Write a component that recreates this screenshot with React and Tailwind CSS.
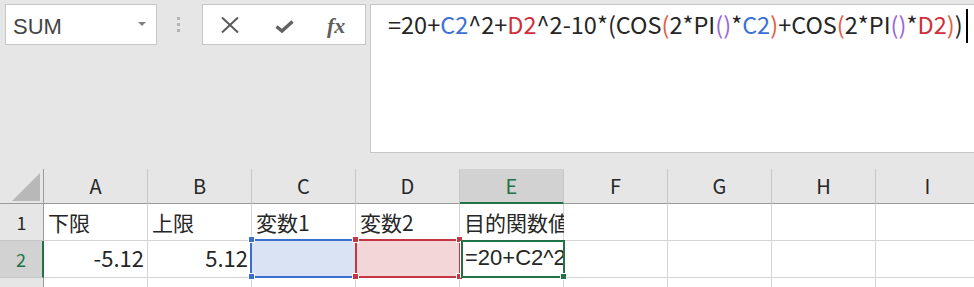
import React from "react";

const cols = ["A", "B", "C", "D", "E", "F", "G", "H", "I"];

const blue = "text-[#3b71d4]";
const red = "text-[#cf2f3c]";
const paren = "text-[#e2603f]";
const purple = "text-[#9a66d9]";

const Handle = ({ className }) => (
  <div className={`absolute w-[7px] h-[7px] border border-white ${className}`} />
);

const App = () => {
  return (
    <div className="w-[974px] h-[287px] overflow-hidden bg-[#e6e6e6] font-['Noto_Sans_CJK_JP',sans-serif] text-[#262626]">
      {/* name box + formula bar */}
      <div className="h-[169px] flex items-start pt-[4px]">
        <div className="ml-[5px] w-[152px] h-[41px] bg-white border border-[#c6c6c6] flex items-start pl-[7px] pt-[11px]">
          <span className="font-['Liberation_Sans',sans-serif] text-[22px] leading-[22px] text-[#444]">
            SUM
          </span>
          <svg className="ml-auto mr-[10px] mt-[6px]" width="8" height="4" viewBox="0 0 8 4">
            <polygon points="0,0 8,0 4,4" fill="#808080" />
          </svg>
        </div>

        <div className="ml-[20px] mt-[13px] flex flex-col gap-[3px]">
          <div className="w-[3px] h-[3px] bg-[#b4b4b4]" />
          <div className="w-[3px] h-[3px] bg-[#b4b4b4]" />
          <div className="w-[3px] h-[3px] bg-[#b4b4b4]" />
        </div>

        <div className="ml-[22px] w-[164px] h-[41px] bg-white border border-[#c6c6c6] flex items-start">
          <svg className="ml-[18px] mt-[12px]" width="18" height="16" viewBox="0 0 18 16">
            <path d="M1 0.5 L17 15.5 M17 0.5 L1 15.5" stroke="#5a5a5a" strokeWidth="2" fill="none" />
          </svg>
          <svg className="ml-[36px] mt-[15px]" width="19" height="13" viewBox="0 0 19 13">
            <path d="M1.5 6.5 L7 11 L17.5 1.5" stroke="#636363" strokeWidth="3.5" fill="none" />
          </svg>
          <span className="ml-[33px] mt-[10px] font-['Liberation_Serif',serif] italic font-semibold text-[22px] leading-[22px] text-[#5f5f5f]">
            fx
          </span>
        </div>

        <div className="ml-[4px] flex-1 h-[149px] bg-white border-l border-y border-[#c6c6c6] flex items-start pl-[17px]">
          <div className="pt-[8px] text-[23.5px] leading-[23px] whitespace-nowrap">
            =20+<span className={blue}>C2</span>^2+<span className={red}>D2</span>^2-10*(COS
            <span className={paren}>(</span>2*PI<span className={purple}>()</span>*
            <span className={blue}>C2</span>
            <span className={paren}>)</span>+COS<span className={paren}>(</span>2*PI
            <span className={purple}>()</span>*<span className={red}>D2</span>
            <span className={paren}>)</span>)
          </div>
          <div className="ml-[3px] mt-[4px] w-[2px] h-[34px] bg-black" />
        </div>
      </div>

      {/* sheet grid */}
      <div className="grid grid-cols-[44px_repeat(9,104px)] grid-rows-[35px_37px_37px_37px]">
        <div className="border-r border-b border-[#9b9b9b]">
          <svg width="43" height="34" viewBox="0 0 43 34">
            <polygon points="40,4 40,32 12,32" fill="#b8b8b8" />
          </svg>
        </div>
        {cols.map((c) =>
          c === "E" ? (
            <div
              key={c}
              className="bg-[#d2d2d2] border-r border-r-[#c6c6c6] border-b-2 border-b-[#217346] flex items-center justify-center text-[20px] leading-none text-[#217346]"
            >
              {c}
            </div>
          ) : (
            <div
              key={c}
              className="border-r border-r-[#c6c6c6] border-b border-b-[#9b9b9b] flex items-center justify-center text-[20px] leading-none"
            >
              {c}
            </div>
          )
        )}

        {/* row 1 */}
        <div className="border-r border-r-[#9b9b9b] border-b border-b-[#c6c6c6] flex items-center justify-center text-[18px] leading-none">
          1
        </div>
        {["下限", "上限", "変数1", "変数2", "目的関数値", "", "", "", ""].map((t, i) => (
          <div
            key={i}
            className="bg-white border-r border-b border-[#d4d4d4] flex items-center pl-[4px] text-[21px] leading-none whitespace-nowrap"
          >
            {t}
          </div>
        ))}

        {/* row 2 */}
        <div className="bg-[#d2d2d2] border-r-2 border-r-[#217346] border-b border-b-[#c6c6c6] flex items-center justify-center text-[18px] leading-none text-[#217346]">
          2
        </div>
        <div className="bg-white border-r border-b border-[#d4d4d4] flex items-center justify-end pr-[3px] pb-[4px] text-[22px] leading-none">
          -5.12
        </div>
        <div className="bg-white border-r border-b border-[#d4d4d4] flex items-center justify-end pr-[3px] pb-[4px] text-[22px] leading-none">
          5.12
        </div>
        <div className="relative bg-[#dae3f3] border-r border-b border-[#d4d4d4]">
          <div className="absolute left-[-2px] top-[-2px] w-[107px] h-[39px] border-2 border-[#3b6fcf]" />
          <Handle className="left-[-4px] top-[-5px] bg-[#3b6fcf]" />
          <Handle className="left-[-4px] top-[32px] bg-[#3b6fcf]" />
        </div>
        <div className="relative bg-[#f3d6d8] border-r border-b border-[#d4d4d4]">
          <div className="absolute left-[-1px] top-[-2px] w-[106px] h-[39px] border-2 border-[#c63642]" />
          <Handle className="left-[-4px] top-[-5px] bg-[#c63642]" />
          <Handle className="left-[-4px] top-[32px] bg-[#c63642]" />
          <Handle className="left-[100px] top-[-5px] bg-[#c63642]" />
          <Handle className="left-[100px] top-[32px] bg-[#c63642]" />
        </div>
        <div className="relative bg-white border-r border-b border-[#d4d4d4]">
          <div className="h-full overflow-hidden flex items-center pl-[5px] pb-[3px] font-['Liberation_Sans',sans-serif] text-[22px] leading-none whitespace-nowrap">
            =20+C2^2+D2^2-10*(COS(2*PI()*C2)+COS(2*PI()*D2))
          </div>
          <div className="absolute left-[1px] top-[-1px] w-[104px] h-[38px] border-2 border-[#217346]" />
          <Handle className="left-[100px] top-[32px] bg-[#217346]" />
        </div>
        {[0, 1, 2, 3].map((i) => (
          <div key={i} className="bg-white border-r border-b border-[#d4d4d4]" />
        ))}

        {/* row 3 */}
        <div className="border-r border-r-[#9b9b9b] border-b border-b-[#c6c6c6] flex items-center justify-center text-[18px] leading-none">
          3
        </div>
        {cols.map((c) => (
          <div key={c} className="bg-white border-r border-b border-[#d4d4d4]" />
        ))}
      </div>
    </div>
  );
};

export default App;
